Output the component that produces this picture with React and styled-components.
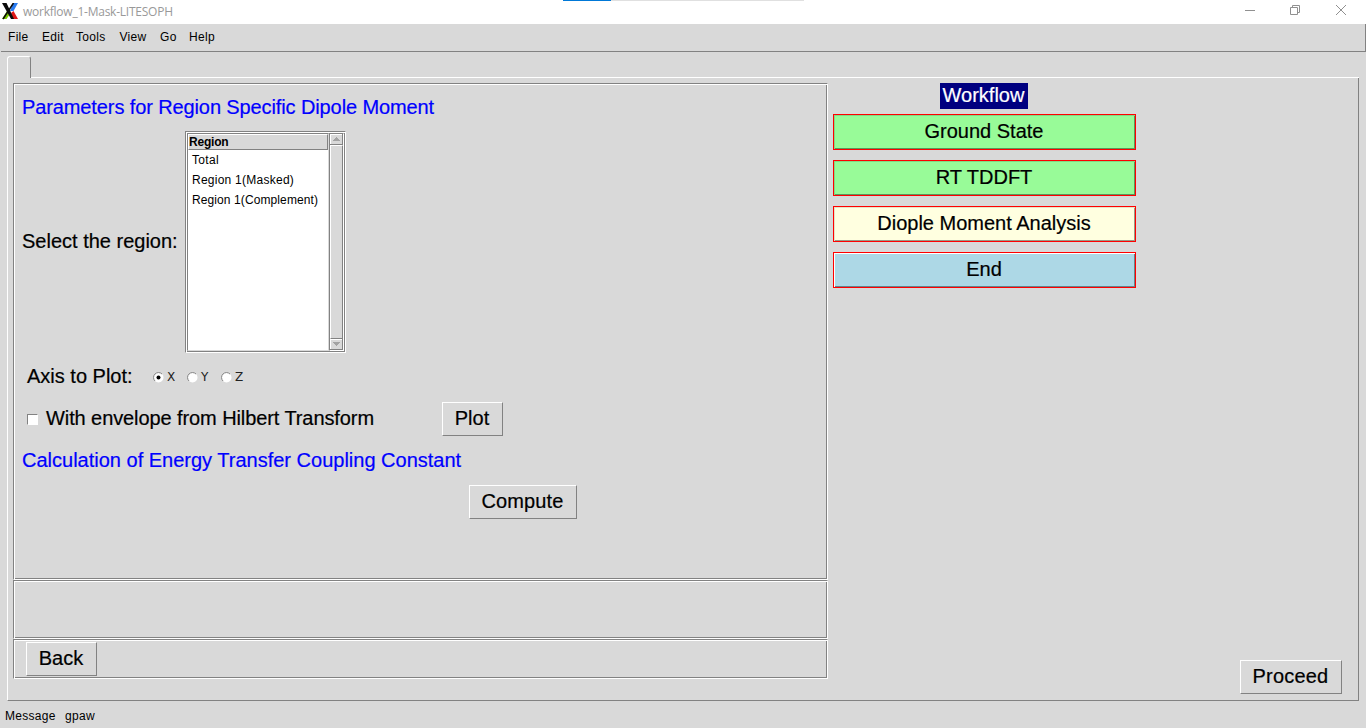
import React from 'react';
import styled, { createGlobalStyle } from 'styled-components';

const Global = createGlobalStyle`
  * { box-sizing: border-box; }
  body { margin: 0; overflow: hidden; background: #d9d9d9; font-family: "Liberation Sans", sans-serif; color: #000; }
`;
const Window = styled.div`
  width: 1366px; height: 728px; display: flex; flex-direction: column; background: #d9d9d9;
`;
const TitleBar = styled.header`
  position: relative; height: 24px; background: #fff; display: flex; align-items: center; padding-left: 2px;
`;
const Logo = styled.svg`display: block; width: 16px; height: 17px; align-self: flex-start; margin-top: 3px;`;
const Title = styled.span`
  font: 12px/24px "Open Sans", sans-serif; color: #999; margin-left: 5px; letter-spacing: -0.24px; white-space: nowrap;
`;
const Progress = styled.i`
  position: absolute; left: 563px; top: 0; width: 241px; height: 1px; background: #e0e0e0;
  &::before { content: ""; display: block; width: 48px; height: 1px; background: #0078d7; }
`;
const Controls = styled.div`
  margin-left: auto; display: flex; gap: 34px; padding-right: 19px; height: 20px; align-self: flex-start; align-items: center;
`;
const Menu = styled.nav`
  height: 28px; margin-left: 1px; border-right: 1px solid #828282; border-bottom: 1px solid #828282;
  display: flex; padding-left: 7px;
`;
const Label = styled.span`
  display: block; flex: none; white-space: pre; font-size: ${p => p.$size || 20}px; line-height: ${p => p.$lh || 26}px;
  letter-spacing: ${p => p.$ls || 0}px; color: ${p => p.$color || '#000'}; width: ${p => (p.$w ? p.$w + 'px' : 'auto')};
  font-weight: ${p => (p.$bold ? 700 : 400)}; -webkit-text-stroke: ${p => (p.$size ? 0 : 0.2)}px;
`;
const Choice = styled.span`
  flex: none; width: 20px; font: 12px/26px "DejaVu Sans", sans-serif; color: #222;
`;
const TabStrip = styled.div`
  height: 26px; padding: 4px 0 0 7px; display: flex;
`;
const Tab = styled.div`
  width: 24px; height: 22px; border: 1px solid #fff; border-right-color: #828282; border-bottom: 0; border-radius: 3px 3px 0 0;
`;
const TabLine = styled.div`
  flex: 1; align-self: flex-end; height: 1px; background: #fff; margin-right: 7px;
`;
const Pane = styled.main`
  margin: 0 7px; height: 623px; padding: 5px 16px 6px 5px; display: flex;
  border-left: 1px solid #fff; border-right: 1px solid #828282; border-bottom: 1px solid #828282;
`;
const Left = styled.section`width: 815px; display: flex; flex-direction: column;`;
const Groove = styled.div`
  height: ${p => p.$h}px; flex: none; border: 1px solid; border-color: #828282 #fff #fff #828282;
  box-shadow: inset 1px 1px #fff, inset -1px -1px #828282;
  padding: ${p => p.$pad || '0'};
`;
const Row = styled.div`
  display: flex; align-items: center; height: ${p => p.$h}px; padding-left: ${p => p.$pl || 0}px;
  & > ${Label} { margin-top: ${p => (p.$first ? 0 : -2)}px; }
`;
const Button = styled.button`
  width: ${p => p.$w}px; height: 34px; padding: 0 1px 2px 0; background: #d9d9d9; border: 1px solid; border-color: #fff #828282 #828282 #fff;
  border-radius: 0; font: 20px/30px "Liberation Sans", sans-serif; letter-spacing: ${p => p.$ls || 0}px; color: #000; margin-left: ${p => p.$ml || 0}px;
  display: flex; justify-content: center; align-items: center; white-space: nowrap; -webkit-text-stroke: 0.2px;
`;
const Tree = styled.div`
  width: 161px; height: 222px; margin-left: 8px; border: 1px solid; border-color: #828282 #fff #fff #828282;
  box-shadow: inset 1px 1px #fff, inset -1px -1px #828282; padding: 1px; display: flex;
`;
const List = styled.div`
  width: 142px; height: 218px; background: #fff; border: 1px solid; border-color: #828282 #d9d9d9 #d9d9d9 #828282;
`;
const Heading = styled.div`
  height: 16px; background: #d9d9d9; border: 1px solid; border-color: #fff #828282 #828282 #fff;
`;
const Item = styled.div`height: 20px; padding-left: 4px;`;
const Scroll = styled.div`
  width: 15px; height: 218px; border: 1px solid; border-color: #828282 #fff #fff #828282; background: #d9d9d9;
  display: flex; flex-direction: column; justify-content: space-between;
`;
const Thumb = styled.div`
  flex: 1; border: 1px solid; border-color: #fff #828282 #828282 #fff;
`;
const Arrow = styled.svg`display: block; flex: none; width: 13px; height: 11px;`;
const Radio = styled.svg`display: block; flex: none; width: 11px; height: 11px; margin-right: 3px;`;
const Check = styled.i`
  width: 11px; height: 11px; background: #fff; border: 1px solid; border-color: #828282 #fff #fff #828282; margin-right: 8px;
`;
const Right = styled.aside`
  flex: 1; margin-left: 5px; display: flex; flex-direction: column; align-items: flex-start;
`;
const Flow = styled.div`width: 303px; display: flex; flex-direction: column; align-items: center; gap: 10px;`;
const Badge = styled.div`
  width: 88px; height: 26px; margin: 0 1px -5px 0; padding-right: 1px; background: #000080; color: #fff; font-size: 20px; line-height: 25px;
  display: flex; justify-content: center; -webkit-text-stroke: 0.2px;
`;
const Step = styled.div`
  width: 303px; height: 36px; background: ${p => p.$bg}; border: 1px solid #f00; font-size: 20px; line-height: 33px;
  box-shadow: inset 1px 1px ${p => p.$hi}, inset -1px -1px ${p => p.$lo};
  display: flex; justify-content: center; padding-right: 1px; -webkit-text-stroke: 0.2px;
`;
const Foot = styled.div`margin-top: auto; align-self: flex-end;`;
const Status = styled.footer`height: 27px; padding: 2px 0 0 5px; display: flex;`;

const RadioDot = ({ on }) => (
  <Radio viewBox="0 0 11 11">
    <circle cx="5.5" cy="5.5" r="5" fill="#fff" />
    <path d="M2 9A4.9 4.9 0 0 1 9 2" fill="none" stroke="#828282" />
    {on && <circle cx="5.5" cy="5.5" r="2" />}
  </Radio>
);
const ArrowButton = ({ down }) => (
  <Arrow viewBox="0 0 13 11" shapeRendering="crispEdges">
    <path d="M0.5 11V.5H13" fill="none" stroke="#fff" />
    <path d="M12.5 0V10.5H0" fill="none" stroke="#828282" />
    <path d={down ? 'M3 3H10V4H9V5H8V6H7V7H6V6H5V5H4V4H3Z' : 'M3 7H10V6H9V5H8V4H7V3H6V4H5V5H4V6H3Z'} fill="#a3a3a3" />
  </Arrow>
);

const menus = [['File', 34], ['Edit', 34], ['Tools', 43.5], ['View', 40.5], ['Go', 29], ['Help', 30]];
const regions = [['Total', 0.3], ['Region 1(Masked)', 0.25], ['Region 1(Complement)', 0.1]];
const steps = [
  ['Ground State', '#98fb98', '#84d984', '#5b965b'],
  ['RT TDDFT', '#98fb98', '#84d984', '#5b965b'],
  ['Diople Moment Analysis', '#ffffe0', '#e4e4c8', '#999986'],
  ['End', '#add8e6', '#fff', '#68828a'],
];

export default function App() {
  return (
    <Window>
      <Global />
      <TitleBar>
        <Logo viewBox="0 0 16 17">
          <path d="M11 0H16L11.5 8H8Z" fill="#2b7cf0" />
          <path d="M0 16L5 8 8 11 4.5 16Z" fill="#7ac800" />
          <path d="M9 10L11.5 8 16 16H11Z" fill="#e01818" />
          <path d="M0 0H4.5L12 16H9Z" fill="#0a0a0a" />
          <path d="M11.5 0L1 16" stroke="#0a0a0a" strokeWidth="1.5" />
        </Logo>
        <Title>workflow_1-Mask-LITESOPH</Title>
        <Progress />
        <Controls>
          <svg width="12" height="12" stroke="#909090" fill="none"><path d="M2 6.5H12" /></svg>
          <svg width="12" height="12" stroke="#909090" fill="none"><path d="M1.5 3.5H8.5V10.5H1.5ZM3.5 3.5V1.5H10.5V8.5H8.5" /></svg>
          <svg width="12" height="12" stroke="#909090" fill="none"><path d="M1 1L11 11M11 1L1 11" /></svg>
        </Controls>
      </TitleBar>
      <Menu>{menus.map(([t, w]) => <Label key={t} $size={12} $lh={26} $w={w} $ls={0.3}>{t}</Label>)}</Menu>
      <TabStrip><Tab /><TabLine /></TabStrip>
      <Pane>
        <Left>
          <Groove $h={497} $pad="8px 0 0 8px">
            <Row $h={30} $first><Label $color="#00f" $ls={-0.11}>Parameters for Region Specific Dipole Moment</Label></Row>
            <Row $h={240}>
              <Label $w={155}>Select the region:</Label>
              <Tree>
                <List>
                  <Heading><Label $size={12} $lh={15} $ls={-0.2} $bold>Region</Label></Heading>
                  {regions.map(([t, ls]) => (
                    <Item key={t}><Label $size={12} $lh={20} $ls={ls}>{t}</Label></Item>
                  ))}
                </List>
                <Scroll><ArrowButton /><Thumb /><ArrowButton down /></Scroll>
              </Tree>
            </Row>
            <Row $h={30} $pl={5}>
              <Label $w={126}>Axis to Plot:</Label>
              {['X', 'Y', 'Z'].map((t, i) => (
                <React.Fragment key={t}><RadioDot on={i === 0} /><Choice>{t}</Choice></React.Fragment>
              ))}
            </Row>
            <Row $h={54} $pl={5}>
              <Check /><Label $w={396} $ls={-0.09}>With envelope from Hilbert Transform</Label><Button $w={61}>Plot</Button>
            </Row>
            <Row $h={30}><Label $color="#00f">Calculation of Energy Transfer Coupling Constant</Label></Row>
            <Row $h={52}><Button $w={108} $ml={447} $ls={0.1}>Compute</Button></Row>
          </Groove>
          <Groove $h={59} />
          <Groove $h={40} $pad="2px 0 0 12px"><Button $w={71}>Back</Button></Groove>
        </Left>
        <Right>
          <Flow>
            <Badge>Workflow</Badge>
            {steps.map(([t, bg, hi, lo]) => <Step key={t} $bg={bg} $hi={hi} $lo={lo}>{t}</Step>)}
          </Flow>
          <Foot><Button $w={102} $ls={0.2}>Proceed</Button></Foot>
        </Right>
      </Pane>
      <Status><Label $size={12} $w={60} $ls={0.3}>Message</Label><Label $size={12} $ls={0.3}>gpaw</Label></Status>
    </Window>
  );
}
